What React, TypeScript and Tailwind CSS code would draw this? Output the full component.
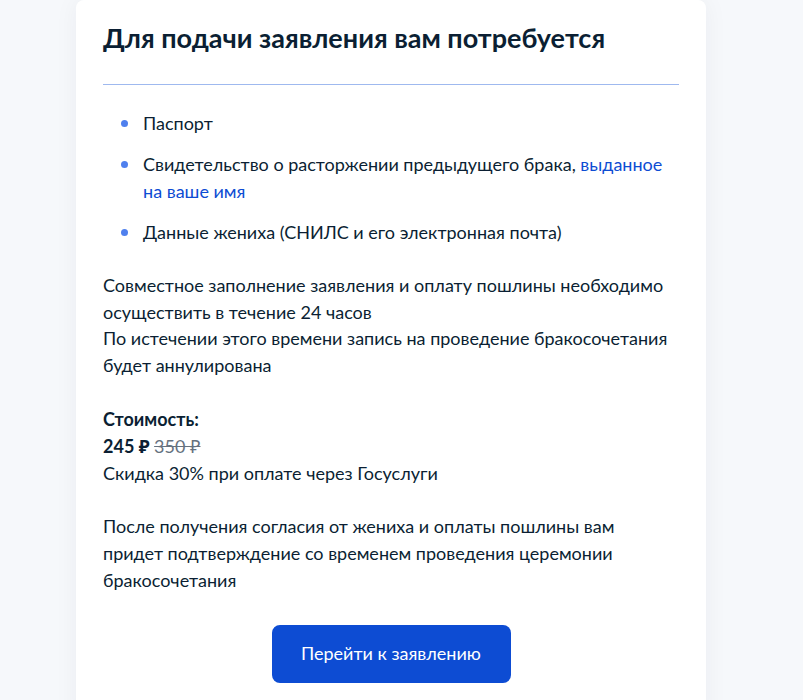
import React from 'react';

const docs = [
  { text: 'Паспорт' },
  { text: 'Свидетельство о расторжении предыдущего брака, ', link: 'выданное на ваше имя' },
  { text: 'Данные жениха (СНИЛС и его электронная почта)' },
];

export default function App() {
  return (
    <div className="min-h-[700px] bg-[#f6f8fb] font-['Lato','Noto_Sans',sans-serif] text-[#0b1f33]">
      <div className="ml-[76px] w-[630px] min-h-[700px] rounded-t-lg bg-white px-[27px] pt-[20px] pb-10 shadow-[0_0_24px_rgba(11,31,51,0.05)]">
        {/* Header */}
        <h2 className="text-[27px] font-bold leading-[36px]">
          Для подачи заявления вам потребуется
        </h2>
        <div className="mt-[28px] h-px bg-[#9fb9ef]" />

        {/* Documents */}
        <ul className="mt-[25px] flex flex-col gap-[14px] pl-[18px]">
          {docs.map((d) => (
            <li key={d.text} className="flex items-start text-[18px] leading-[27px]">
              <span className="mt-[10px] mr-[15px] h-[7px] w-[7px] shrink-0 rounded-full bg-[#4f80ee]" />
              <span>
                {d.text}
                {d.link && <span className="text-[#0d4cd3]">{d.link}</span>}
              </span>
            </li>
          ))}
        </ul>

        <p className="mt-[26px] text-[18px] leading-[26.7px]">
          Совместное заполнение заявления и оплату пошлины необходимо осуществить в течение 24 часов
          <br />
          По истечении этого времени запись на проведение бракосочетания будет аннулирована
        </p>

        {/* Price */}
        <div className="mt-[27px] text-[18px] leading-[27px]">
          <p className="font-bold">Стоимость:</p>
          <p>
            <span className="font-bold">245 ₽</span>{' '}
            <span className="text-[#66727f] line-through">350 ₽</span>
          </p>
          <p>Скидка 30% при оплате через Госуслуги</p>
        </div>

        <p className="mt-[26px] text-[18px] leading-[27px]">
          После получения согласия от жениха и оплаты пошлины вам придет подтверждение со временем проведения церемонии бракосочетания
        </p>

        <div className="mt-[31px] flex justify-center">
          <button className="h-[58px] w-[239px] rounded-lg bg-[#0d4cd3] text-[18px] text-white">
            Перейти к заявлению
          </button>
        </div>
      </div>
    </div>
  );
}
